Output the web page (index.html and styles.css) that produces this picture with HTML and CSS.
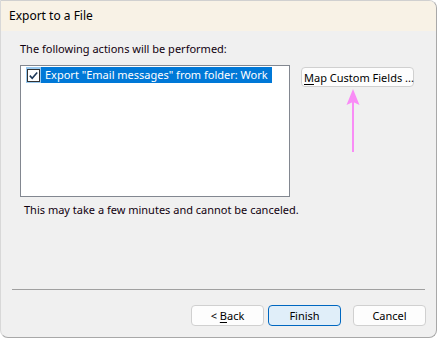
FILE: index.html
```html
<!DOCTYPE html>
<html lang="en">
<head>
    <meta charset="UTF-8">
    <title>Export to a File</title>
    <link rel="stylesheet" href="styles.css">
</head>
<body>
    <div class="window">
        <div class="titlebar">Export to a File</div>

        <div class="content">
            <p class="label">The following actions will be performed:</p>
            <div class="actions-row">
                <div class="listbox">
                    <div class="list-item">
                        <span class="check">
                            <svg width="13" height="13" viewBox="0 0 13 13">
                                <rect x="0.5" y="0.5" width="12" height="12" fill="#fff" stroke="#333" />
                                <path d="M2.8 6.6 L5.2 9.2 L10.2 3.4" fill="none" stroke="#1f3a5a" stroke-width="1.6" />
                            </svg>
                        </span>
                        <span class="item-text">Export "Email messages" from folder: Work</span>
                    </div>
                </div>
                <div class="side">
                    <button class="btn map-btn"><u>M</u>ap Custom Fields ...</button>
                    <svg class="arrow" width="16" height="64" viewBox="0 0 16 64">
                        <path d="M8 0 L14.5 16 L8 13 L1.5 16 Z" fill="#f98cf6" />
                        <line x1="8" y1="12" x2="8" y2="63" stroke="#f98cf6" stroke-width="2" />
                    </svg>
                </div>
            </div>
            <p class="note">This may take a few minutes and cannot be canceled.</p>
        </div>

        <div class="separator"></div>

        <div class="footer">
            <button class="btn">&lt; <u>B</u>ack</button>
            <button class="btn primary">Finish</button>
            <button class="btn cancel">Cancel</button>
        </div>
    </div>
</body>
</html>
```

FILE: styles.css
```css
* {
    margin: 0;
    padding: 0;
    box-sizing: border-box;
}

body {
    font-family: 'Noto Sans', 'Open Sans', sans-serif;
    font-size: 11px;
    color: #000;
    background: #ffffff;
    width: 437px;
    height: 338px;
}

.window {
    width: 437px;
    height: 338px;
    background: #f0f0f0;
    border: 1px solid #a8a8a8;
    border-left-color: #d8d8d8;
    border-top-color: #d0d0d0;
    border-radius: 0 8px 8px 8px;
    overflow: hidden;
    display: flex;
    flex-direction: column;
}

.titlebar {
    height: 30px;
    line-height: 30px;
    padding-left: 8px;
    font-size: 12px;
    background: #f8f2e6;
    color: #000;
}

.content {
    flex: 1;
    padding: 10px 0 0 19px;
}

.label {
    line-height: 16px;
    color: #10000f;
}

.actions-row {
    display: flex;
    margin-top: 8px;
}

.listbox {
    width: 270px;
    height: 132px;
    background: #fff;
    border: 1px solid #828790;
    padding: 1px 0 0 5px;
}

.list-item {
    display: flex;
    height: 16px;
}

.check {
    width: 15px;
    height: 16px;
    background: #99c9ef;
    display: flex;
    align-items: center;
    justify-content: center;
}

.item-text {
    background: #0078d7;
    color: #fff;
    line-height: 16px;
    padding: 0 4px 0 4px;
    white-space: nowrap;
}

.side {
    margin-left: 11px;
    padding-top: 2px;
    display: flex;
    flex-direction: column;
}

.btn {
    font-family: inherit;
    font-size: 11px;
    color: #000;
    background: #fdfdfd;
    border: 1px solid #d0d0d0;
    border-radius: 4px;
    height: 21px;
    width: 73px;
}

.btn u {
    text-decoration-thickness: 1px;
    text-underline-offset: 2px;
}

.map-btn {
    width: 113px;
    height: 20px;
    padding: 0 0 0 2px;
    text-align: left;
    white-space: nowrap;
}

.arrow {
    margin: 2px 0 0 44px;
}

.note {
    margin: 5px 0 0 4px;
    line-height: 16px;
    color: #10000f;
}

.separator {
    height: 1px;
    background: #a0a0a0;
    margin: 0 11px 0 11px;
}

.footer {
    display: flex;
    justify-content: flex-end;
    padding: 15px 10px 11px 0;
    gap: 4px;
}

.primary {
    background: #e0eef9;
    border-color: #0067c0;
}

.cancel {
    margin-left: 8px;
}
```
